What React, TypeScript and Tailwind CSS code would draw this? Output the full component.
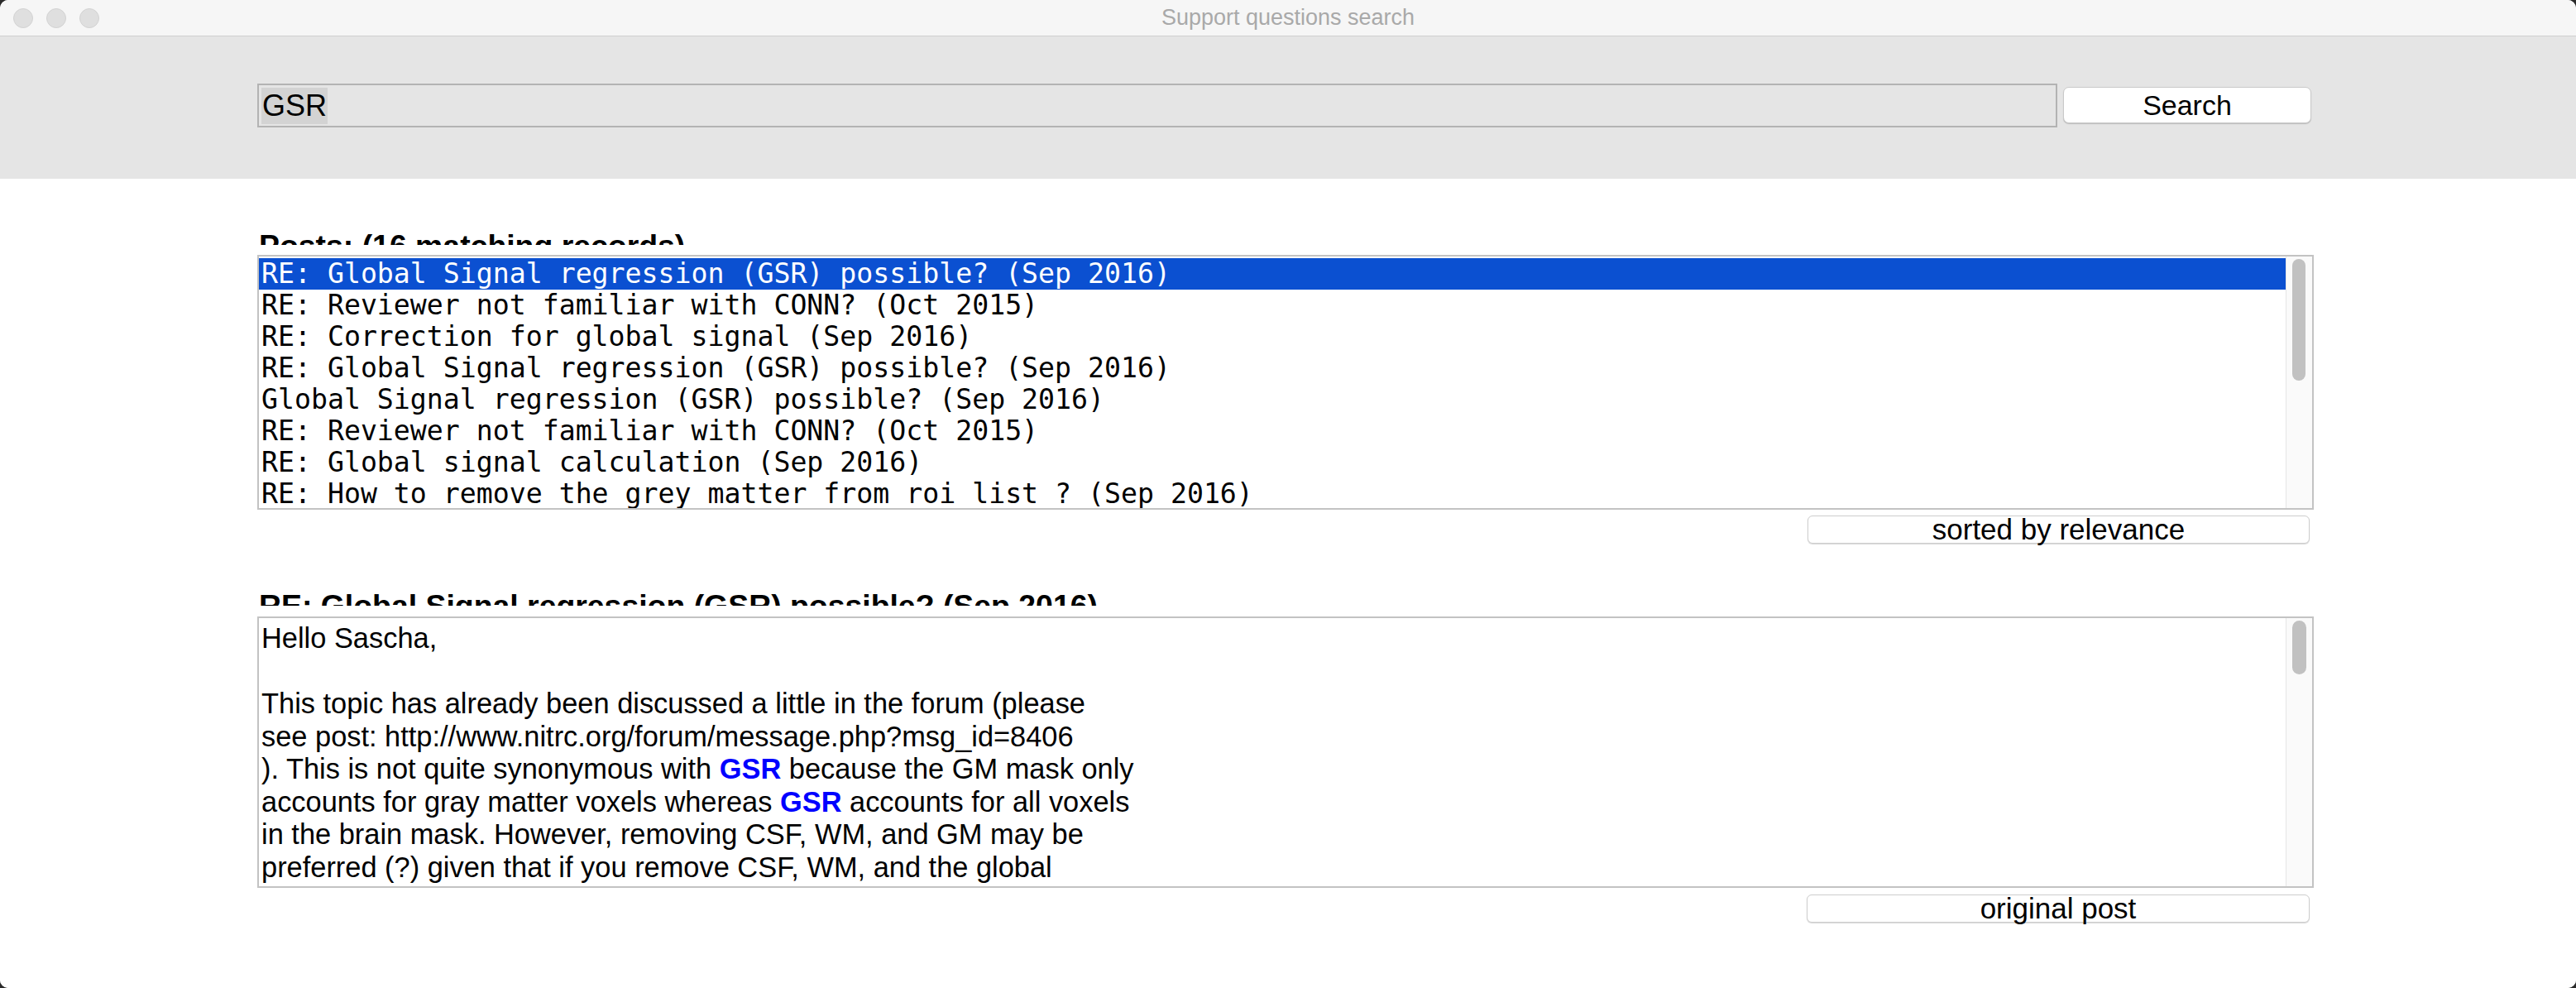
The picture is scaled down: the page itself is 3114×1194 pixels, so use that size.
import React from "react";

const rows = [
  "RE: Global Signal regression (GSR) possible? (Sep 2016)",
  "RE: Reviewer not familiar with CONN? (Oct 2015)",
  "RE: Correction for global signal (Sep 2016)",
  "RE: Global Signal regression (GSR) possible? (Sep 2016)",
  "Global Signal regression (GSR) possible? (Sep 2016)",
  "RE: Reviewer not familiar with CONN? (Oct 2015)",
  "RE: Global signal calculation (Sep 2016)",
  "RE: How to remove the grey matter from roi list ? (Sep 2016)",
];

const G = () => <span className="font-bold text-[#0000ff]">GSR</span>;

export default function App() {
  const sans = { fontFamily: '"Liberation Sans", Arial, Helvetica, sans-serif' };
  return (
    <div className="w-[3114px] h-[1194px] bg-[#2b2b2b] overflow-hidden" style={sans}>
      <div className="w-full h-full rounded-[10px] overflow-hidden bg-white flex flex-col">
        {/* title bar */}
        <div className="h-[44px] bg-[#f6f6f6] border-b border-[#d0d0d0] flex items-center relative shrink-0">
          <div className="flex items-center gap-[16px] pl-[16px]">
            <div className="w-[24px] h-[24px] rounded-full bg-[#dfdfdf] border border-[#d2d2d2]" />
            <div className="w-[24px] h-[24px] rounded-full bg-[#dfdfdf] border border-[#d2d2d2]" />
            <div className="w-[24px] h-[24px] rounded-full bg-[#dfdfdf] border border-[#d2d2d2]" />
          </div>
          <div className="absolute inset-0 flex items-center justify-center text-[27px] text-[#a9a9a9]">
            Support questions search
          </div>
        </div>
        {/* search header */}
        <div className="h-[172px] bg-[#e5e5e5] shrink-0 pt-[57px] pl-[311px]">
          <div className="w-[2486px] flex items-start gap-[7px]">
            <div className="flex-1 h-[53px] border-2 border-[#b3b3b3] bg-[#e5e5e5] flex items-center pl-[3px]">
              <span className="bg-[#d3d3d3] text-[36px] leading-[44px] text-black px-[1px]">GSR</span>
            </div>
            <button className="mt-[4px] mr-[3px] w-[300px] h-[44px] bg-white rounded-[7px] border border-[#c9c9c9] shadow-[0_1px_1px_rgba(0,0,0,0.18)] text-[34px] leading-[40px] text-black">
              Search
            </button>
          </div>
        </div>
        {/* content */}
        <div className="flex-1 bg-white pl-[311px]">
          <div className="w-[2486px]">
            <div className="mt-[61px] h-[19px] overflow-hidden pl-[2px]">
              <div className="text-[37.4px] leading-[40px] font-bold text-black whitespace-pre">
                Posts: (16 matching records)
              </div>
            </div>
            <div className="mt-[12px] h-[308px] border-2 border-[#c3c3c3] flex overflow-hidden">
              <div className="flex-1 pt-[2px] overflow-hidden" style={{ fontFamily: '"DejaVu Sans Mono", "Liberation Mono", monospace' }}>
                {rows.map((r, i) => (
                  <div
                    key={i}
                    className={
                      "h-[38px] leading-[38px] text-[33.2px] whitespace-pre pl-[3px] " +
                      (i === 0 ? "bg-[#0b50d1] text-white" : "text-black")
                    }
                  >
                    {r}
                  </div>
                ))}
              </div>
              <div className="w-[32px] bg-[#fafafa] border-l border-[#e6e6e6] pt-[3px] pl-[7px]">
                <div className="w-[16px] h-[147px] rounded-full bg-[#c1c1c1]" />
              </div>
            </div>
            <div className="flex justify-end mt-[7px] pr-[5px]">
              <button className="w-[607px] h-[34px] bg-white rounded-[6px] border border-[#cdcdcd] shadow-[0_1px_1px_rgba(0,0,0,0.15)] text-[35px] leading-[32px] text-black">
                sorted by relevance
              </button>
            </div>
            <div className="mt-[55px] h-[20px] overflow-hidden pl-[2px]">
              <div className="text-[37.4px] leading-[40px] font-bold text-black whitespace-pre">
                RE: Global Signal regression (GSR) possible? (Sep 2016)
              </div>
            </div>
            <div className="mt-[13px] h-[328px] border-2 border-[#c3c3c3] flex overflow-hidden">
              <div className="flex-1 pt-[5px] pl-[3px] text-[34.4px] leading-[39.5px] text-black whitespace-pre overflow-hidden">
                <div>Hello Sascha,</div>
                <div>&nbsp;</div>
                <div>This topic has already been discussed a little in the forum (please</div>
                <div>see post: http://www.nitrc.org/forum/message.php?msg_id=8406</div>
                <div>
                  ). This is not quite synonymous with <G /> because the GM mask only
                </div>
                <div>
                  accounts for gray matter voxels whereas <G /> accounts for all voxels
                </div>
                <div>in the brain mask. However, removing CSF, WM, and GM may be</div>
                <div>preferred (?) given that if you remove CSF, WM, and the global</div>
              </div>
              <div className="w-[32px] bg-[#fafafa] border-l border-[#e6e6e6] pt-[3px] pl-[7px]">
                <div className="w-[17px] h-[65px] rounded-full bg-[#c1c1c1]" />
              </div>
            </div>
            <div className="flex justify-end mt-[8px] pr-[5px]">
              <button className="w-[608px] h-[34px] bg-white rounded-[6px] border border-[#cdcdcd] shadow-[0_1px_1px_rgba(0,0,0,0.15)] text-[35px] leading-[32px] text-black">
                original post
              </button>
            </div>
          </div>
        </div>
      </div>
    </div>
  );
}
